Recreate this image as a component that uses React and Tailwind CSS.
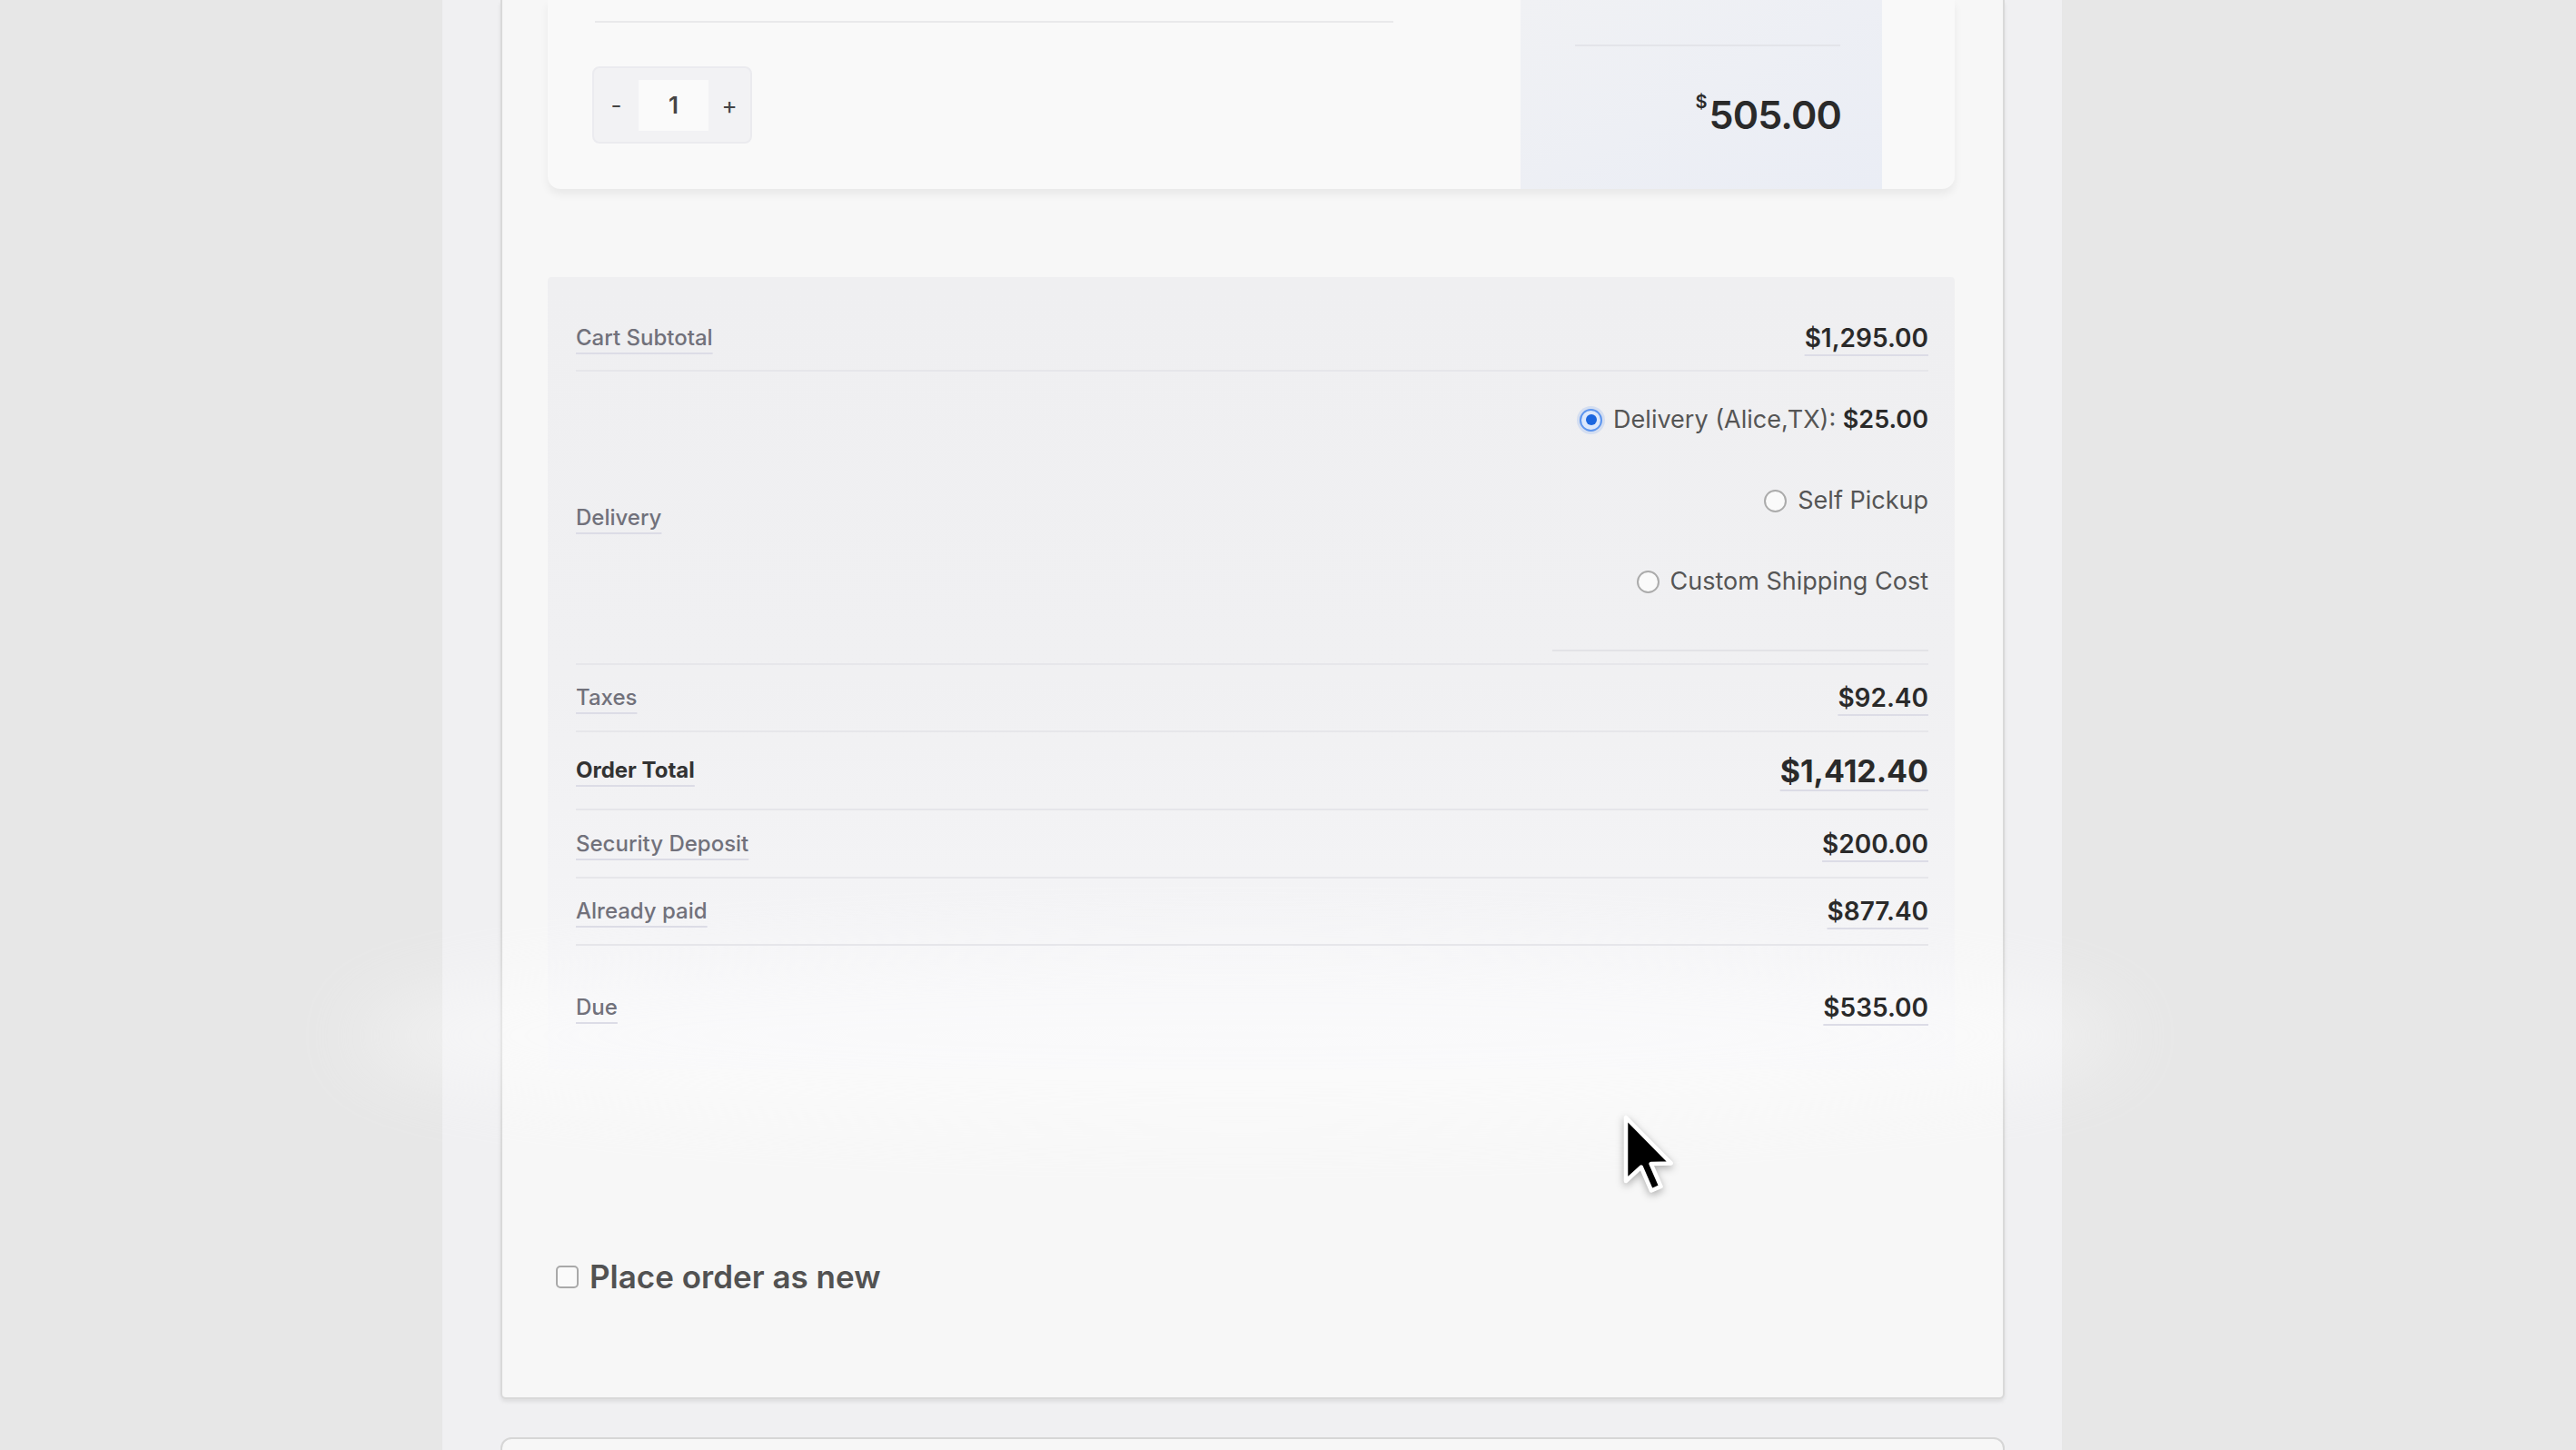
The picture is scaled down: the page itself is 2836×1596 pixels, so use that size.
import React from "react";

const Radio = ({ checked }) =>
  checked ? (
    <span className="flex h-[25px] w-[25px] items-center justify-center rounded-full border-2 border-[#5d95ee] bg-[#dce8fc] shadow-[0_0_0_3px_rgba(90,145,240,0.18)]">
      <span className="h-[12px] w-[12px] rounded-full bg-[#1b66df]" />
    </span>
  ) : (
    <span className="h-[25px] w-[25px] rounded-full border-2 border-[#ababab] bg-[#fafafa]" />
  );

const Row = ({ label, value, h, strong, last }) => (
  <div
    className={`relative z-10 flex items-center justify-between ${h} ${
      last ? "" : "border-b-2 border-[#e6e6ea]"
    }`}
  >
    <span
      className={`underline decoration-2 underline-offset-[8px] decoration-[#dcdce6] ${
        strong ? "text-[24px] font-bold text-[#333]" : "text-[24px] font-medium text-[#71717b]"
      }`}
    >
      {label}
    </span>
    <span
      className={`underline decoration-2 underline-offset-[8px] decoration-[#dcdce6] text-[#2a2a2a] ${
        strong ? "text-[34px] font-bold" : "text-[28px] font-semibold"
      }`}
    >
      {value}
    </span>
  </div>
);

const App = () => {
  return (
    <div className="relative h-[1596px] w-full overflow-hidden bg-[#e7e7e7] font-['Inter',sans-serif]">
      <div className="ml-[487px] h-full w-[1783px] bg-[#f0f0f2] pl-[64px] pr-[63px]">
        {/* order card */}
        <div className="rounded-b-[6px] border-x-2 border-b-2 border-[#d9d9d9] bg-[#f7f7f7] pl-[50px] pr-[53px] shadow-[0_3px_4px_rgba(0,0,0,0.08)]">
          {/* product card */}
          <div className="flex h-[208px] rounded-b-[14px] bg-[#f9f9f9] shadow-[0_6px_10px_rgba(0,0,0,0.06)]">
            <div className="flex-1 pl-[49px] pt-[23px]">
              <div className="ml-[3px] h-[2px] w-[879px] bg-[#e9e9eb]" />
              <div className="mt-[48px] flex h-[85px] w-[176px] items-center rounded-[8px] border-2 border-[#ebebef] bg-[#f2f2f4] text-[26px] text-[#444]">
                <span className="w-[49px] text-center">-</span>
                <span className="flex h-[56px] w-[77px] items-center justify-center bg-[#fafafa] font-semibold">
                  1
                </span>
                <span className="flex-1 text-center">+</span>
              </div>
            </div>
            <div className="mr-[80px] w-[398px] bg-gradient-to-br from-[#f0f1f4] to-[#eaedf5] pt-[49px]">
              <div className="ml-[60px] mr-[46px] h-[2px] bg-[#e3e4e9]" />
              <div className="mt-[54px] flex items-start justify-end pr-[45px] text-[#2a2a2a]">
                <span className="-mt-[3px] mr-[2px] text-[20px] font-semibold leading-none">$</span>
                <span className="text-[43px] font-semibold leading-none tracking-[-0.02em]">505.00</span>
              </div>
            </div>
          </div>

          {/* totals */}
          <div className="mt-[97px] rounded-[4px] bg-gradient-to-b from-[#efeff1] via-[#f0f0f2] to-[#f6f6f8] pl-[31px] pr-[29px] pt-[31px]">
            <Row label="Cart Subtotal" value="$1,295.00" h="h-[73px]" />
            <div className="flex h-[323px] items-center justify-between border-b-2 border-[#e6e6ea]">
              <span className="text-[24px] font-medium text-[#71717b] underline decoration-2 underline-offset-[8px] decoration-[#dcdce6]">
                Delivery
              </span>
              <div className="flex h-full flex-col items-end pt-[35px] text-[27px] text-[#555]">
                <label className="flex h-[36px] items-center gap-[12px]">
                  <Radio checked />
                  <span>
                    Delivery (Alice,TX): <span className="font-semibold text-[#2a2a2a]">$25.00</span>
                  </span>
                </label>
                <label className="mt-[53px] flex h-[36px] items-center gap-[12px]">
                  <Radio />
                  <span>Self Pickup</span>
                </label>
                <label className="mt-[53px] flex h-[36px] items-center gap-[12px]">
                  <Radio />
                  <span>Custom Shipping Cost</span>
                </label>
                <div className="mt-[57px] h-[2px] w-[414px] bg-[#e3e3e6]" />
              </div>
            </div>
            <Row label="Taxes" value="$92.40" h="h-[74px]" />
            <Row label="Order Total" value="$1,412.40" h="h-[86px]" strong />
            <Row label="Security Deposit" value="$200.00" h="h-[75px]" />
            <Row label="Already paid" value="$877.40" h="h-[74px]" />
            <Row label="Due" value="$535.00" h="h-[136px]" last />
          </div>

          <label className="mt-[208px] mb-[113px] ml-[9px] flex h-[40px] items-center gap-[12px]">
            <span className="h-[25px] w-[25px] rounded-[5px] border-2 border-[#a9a9a9] bg-[#fafafa]" />
            <span className="text-[35px] font-semibold text-[#525252]">Place order as new</span>
          </label>
        </div>

        {/* next card */}
        <div className="mt-[42px] h-[60px] rounded-t-[12px] border-2 border-[#d6d6d6] bg-[#f7f7f7]" />
      </div>

      {/* light glow from the recording */}
      <div className="pointer-events-none absolute left-[390px] top-[1040px] h-[200px] w-[1950px] rounded-[50%] bg-white opacity-40 blur-[40px]" />

      {/* mouse pointer */}
      <svg
        className="pointer-events-none absolute left-[1783px] top-[1223px] z-20 h-[98px] w-[63px] drop-shadow-[0_3px_4px_rgba(0,0,0,0.3)]"
        viewBox="0 0 18 28"
      >
        <path
          d="M2 2 L2 22 L6.8 17.6 L10 25 L13 23.7 L9.9 16.6 L16.2 16.4 Z"
          fill="#000"
          stroke="#fff"
          strokeWidth="1.3"
          strokeLinejoin="round"
        />
      </svg>
    </div>
  );
};

export default App;
